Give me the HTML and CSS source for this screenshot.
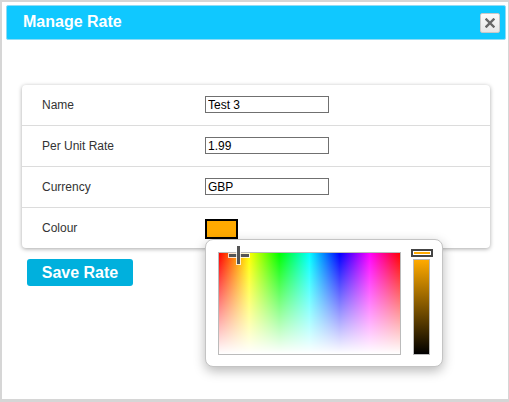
FILE: index.html
```html
<!DOCTYPE html>
<html>
<head>
<meta charset="utf-8">
<link rel="stylesheet" href="styles.css">
</head>
<body>
<div class="backdrop">
  <div class="dialog">
    <div class="header">
      <span class="title">Manage Rate</span>
      <button class="close" aria-label="close">
        <svg width="10" height="10" viewBox="0 0 10 10"><path d="M1.5 1.5 L8.5 8.5 M8.5 1.5 L1.5 8.5" stroke="#666" stroke-width="2.4" stroke-linecap="square"/></svg>
      </button>
    </div>
    <div class="content">
      <div class="card">
        <div class="row"><span class="label">Name</span><input class="field" value="Test 3"></div>
        <div class="row"><span class="label">Per Unit Rate</span><input class="field" value="1.99"></div>
        <div class="row"><span class="label">Currency</span><input class="field" value="GBP"></div>
        <div class="row"><span class="label">Colour</span>
          <div class="swatch-wrap">
            <span class="swatch"></span>
            <div class="picker">
              <div class="pad">
                <div class="sat"></div>
                <div class="cross-h"></div>
                <div class="cross-v"></div>
              </div>
              <div class="slider">
                <div class="bar"></div>
                <div class="handle"></div>
              </div>
            </div>
          </div>
        </div>
      </div>
      <button class="save">Save Rate</button>
    </div>
  </div>
</div>
</body>
</html>
```
FILE: styles.css
```css
html, body {
  margin: 0;
  padding: 0;
  background: #d6d6d6;
  font-family: "Liberation Sans", Arial, sans-serif;
}
.backdrop {
  width: 509px;
  height: 402px;
  padding: 2px 1px 3px 2px;
  box-sizing: border-box;
}
.dialog {
  background: #fff;
  height: 100%;
  box-sizing: border-box;
  padding: 3px 0 0 4px;
}
.header {
  height: 35px;
  width: 500px;
  box-sizing: border-box;
  background: #10c8ff;
  border: 1px solid #8fdcf5;
  border-radius: 2px;
  display: flex;
  align-items: center;
  justify-content: space-between;
  padding: 0 5px 0 16px;
}
.title {
  color: #fff;
  font-weight: bold;
  font-size: 16px;
  margin-top: -1px;
}
.close {
  width: 20px;
  height: 20px;
  padding: 0;
  margin: 0;
  border: 1px solid #c8c8c8;
  border-radius: 2px;
  background: linear-gradient(#fafafa, #e6e6e6);
  display: flex;
  align-items: center;
  justify-content: center;
}
.content {
  padding: 45px 0 0 16px;
}
.card {
  width: 468px;
  background: #fff;
  border-radius: 4px;
  box-shadow: 0 1px 4px rgba(0,0,0,0.35);
}
.row {
  height: 40px;
  display: flex;
  align-items: center;
  border-top: 1px solid #dcdcdc;
}
.row:first-child {
  border-top: none;
}
.label {
  width: 163px;
  padding-left: 20px;
  font-size: 12px;
  color: #333;
}
.field {
  width: 124px;
  height: 17px;
  box-sizing: border-box;
  border: 1px solid #707070;
  padding: 0 2px;
  margin: 0 0 1px 0;
  font-family: "Liberation Sans", Arial, sans-serif;
  font-size: 12px;
  color: #000;
  outline: none;
}
.swatch-wrap {
  position: relative;
  height: 20px;
  margin-top: 1px;
}
.swatch {
  display: block;
  width: 33px;
  height: 20px;
  box-sizing: border-box;
  border: 2px solid #000;
  background: #ffaa00;
}
.picker {
  position: absolute;
  left: 0;
  top: 20px;
  width: 238px;
  height: 128px;
  box-sizing: border-box;
  background: #fff;
  border: 1px solid #c4c4c4;
  border-radius: 8px;
  box-shadow: 0 4px 12px rgba(0,0,0,0.28);
  z-index: 5;
  display: flex;
  padding: 12px 12px 11px 12px;
  gap: 12px;
}
.pad {
  position: relative;
  flex: none;
  width: 183px;
  height: 103px;
  box-sizing: border-box;
  border: 1px solid #bbb;
  background: linear-gradient(to right, #f00 0%, #ff0 16.66%, #0f0 33.33%, #0ff 50%, #00f 66.66%, #f0f 83.33%, #f00 100%);
}
.sat {
  position: absolute;
  inset: 0;
  background: linear-gradient(to bottom, rgba(255,255,255,0) 0%, #fff 100%);
}
.cross-h {
  position: absolute;
  left: 10px;
  top: 1px;
  width: 20px;
  height: 3px;
  background: #555;
  box-shadow: 0 0 0 1px rgba(255,255,255,0.8);
}
.cross-v {
  position: absolute;
  left: 18px;
  top: -7px;
  width: 3px;
  height: 18px;
  background: #555;
  box-shadow: 0 0 0 1px rgba(255,255,255,0.8);
}
.slider {
  position: relative;
  flex: none;
  width: 17px;
  height: 103px;
}
.bar {
  position: absolute;
  left: 0;
  top: 7px;
  width: 17px;
  height: 96px;
  box-sizing: border-box;
  border: 1px solid #bbb;
  background: linear-gradient(#ffaa00, #000);
}
.handle {
  position: absolute;
  left: -2px;
  top: -3px;
  width: 22px;
  height: 8px;
  box-sizing: border-box;
  border: 2px solid #444;
  background: #ffaa00;
  box-shadow: inset 0 0 0 1px #fff;
}
.save {
  margin: 11px 0 0 5px;
  width: 106px;
  height: 27px;
  border: none;
  border-radius: 3px;
  background: #00b0dd;
  color: #fff;
  font-family: "Liberation Sans", Arial, sans-serif;
  font-weight: bold;
  font-size: 16px;
  padding: 0;
  display: block;
}
```
